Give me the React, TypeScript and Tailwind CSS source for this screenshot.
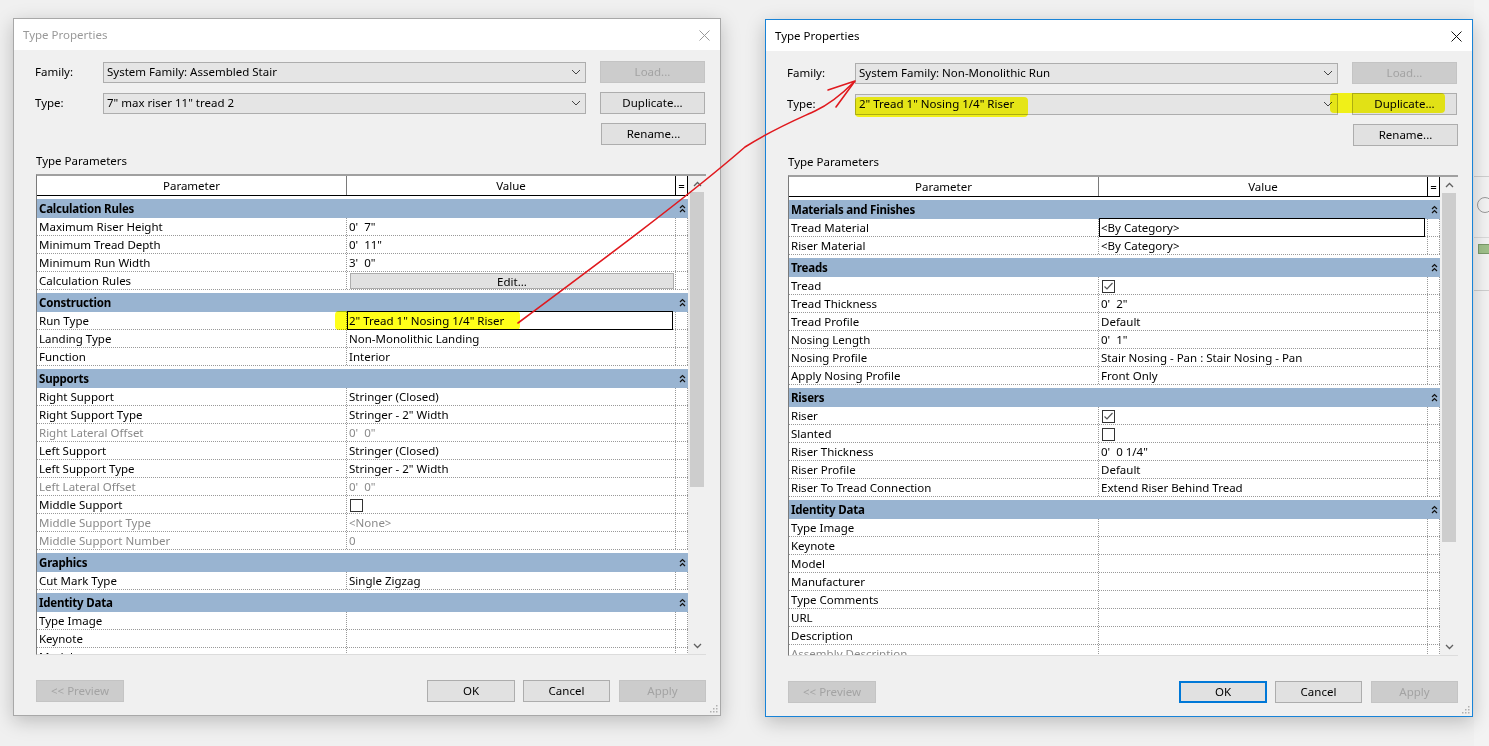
import React from "react"

type Row = {
  label: string
  group?: boolean
  value?: string
  grey?: boolean
  kind?: "edit" | "check" | "box" | "selected"
}

const leftRows: Row[] = [
  { label: "Calculation Rules", group: true },
  { label: "Maximum Riser Height", value: "0'  7\"" },
  { label: "Minimum Tread Depth", value: "0'  11\"" },
  { label: "Minimum Run Width", value: "3'  0\"" },
  { label: "Calculation Rules", kind: "edit" },
  { label: "Construction", group: true },
  { label: "Run Type", value: "2\" Tread 1\" Nosing 1/4\" Riser", kind: "selected" },
  { label: "Landing Type", value: "Non-Monolithic Landing" },
  { label: "Function", value: "Interior" },
  { label: "Supports", group: true },
  { label: "Right Support", value: "Stringer (Closed)" },
  { label: "Right Support Type", value: "Stringer - 2\" Width" },
  { label: "Right Lateral Offset", value: "0'  0\"", grey: true },
  { label: "Left Support", value: "Stringer (Closed)" },
  { label: "Left Support Type", value: "Stringer - 2\" Width" },
  { label: "Left Lateral Offset", value: "0'  0\"", grey: true },
  { label: "Middle Support", kind: "box" },
  { label: "Middle Support Type", value: "<None>", grey: true },
  { label: "Middle Support Number", value: "0", grey: true },
  { label: "Graphics", group: true },
  { label: "Cut Mark Type", value: "Single Zigzag" },
  { label: "Identity Data", group: true },
  { label: "Type Image" },
  { label: "Keynote" },
  { label: "Model" },
]

const rightRows: Row[] = [
  { label: "Materials and Finishes", group: true },
  { label: "Tread Material", value: "<By Category>", kind: "selected" },
  { label: "Riser Material", value: "<By Category>" },
  { label: "Treads", group: true },
  { label: "Tread", kind: "check" },
  { label: "Tread Thickness", value: "0'  2\"" },
  { label: "Tread Profile", value: "Default" },
  { label: "Nosing Length", value: "0'  1\"" },
  { label: "Nosing Profile", value: "Stair Nosing - Pan : Stair Nosing - Pan" },
  { label: "Apply Nosing Profile", value: "Front Only" },
  { label: "Risers", group: true },
  { label: "Riser", kind: "check" },
  { label: "Slanted", kind: "box" },
  { label: "Riser Thickness", value: "0'  0 1/4\"" },
  { label: "Riser Profile", value: "Default" },
  { label: "Riser To Tread Connection", value: "Extend Riser Behind Tread" },
  { label: "Identity Data", group: true },
  { label: "Type Image" },
  { label: "Keynote" },
  { label: "Model" },
  { label: "Manufacturer" },
  { label: "Type Comments" },
  { label: "URL" },
  { label: "Description" },
  { label: "Assembly Description", grey: true },
]

const Chevron = () => (
  <svg width="10" height="6" viewBox="0 0 10 6">
    <polyline points="1,1 5,5 9,1" fill="none" stroke="#444" strokeWidth="1" />
  </svg>
)

const Caret = ({ down }: { down?: boolean }) => (
  <svg width="9" height="6" viewBox="0 0 9 6">
    <polyline points={down ? "1,1 4.5,4.5 8,1" : "1,5 4.5,1.5 8,5"} fill="none" stroke="#606060" strokeWidth="1.3" />
  </svg>
)

const DoubleCaret = () => (
  <svg width="7" height="9" viewBox="0 0 7 9">
    <polyline points="1,4 3.5,1.5 6,4" fill="none" stroke="#111" strokeWidth="1.2" />
    <polyline points="1,8 3.5,5.5 6,8" fill="none" stroke="#111" strokeWidth="1.2" />
  </svg>
)

const CloseX = ({ active }: { active: boolean }) => (
  <svg width="11" height="11" viewBox="0 0 11 11">
    <path d="M0.5,0.5 L10.5,10.5 M10.5,0.5 L0.5,10.5" stroke={active ? "#111" : "#999"} strokeWidth="1" />
  </svg>
)

const Checkbox = ({ checked }: { checked?: boolean }) => (
  <div className="w-[13px] h-[13px] bg-white border border-[#333] flex items-center justify-center">
    {checked && (
      <svg width="11" height="11" viewBox="0 0 11 11">
        <polyline points="1.5,5.5 4,8 9.5,2" fill="none" stroke="#555" strokeWidth="1.2" />
      </svg>
    )}
  </div>
)

const Btn = ({ label, disabled, primary, className = "" }: { label: string; disabled?: boolean; primary?: boolean; className?: string }) => (
  <div
    className={`h-[22px] flex items-center justify-center ${className} ${
      disabled
        ? "bg-[#cccccc] border border-[#c4c4c4] text-[#a3a3a3]"
        : primary
        ? "bg-[#e1e1e1] border-2 border-[#0078d7] text-black"
        : "bg-[#e1e1e1] border border-[#adadad] text-black"
    }`}
  >
    {label}
  </div>
)

const Combo = ({ text }: { text: string }) => (
  <div className="w-[483px] h-[21px] bg-[#e5e5e5] border border-[#adadad] flex items-center justify-between pl-[3px] pr-[4px]">
    <span>{text}</span>
    <Chevron />
  </div>
)

const dot = "border-dotted border-[#999]"

function TableRow({ row }: { row: Row }) {
  if (row.group) {
    return (
      <div className="mt-[3px] h-[19px] shrink-0 bg-[#99b4d1] flex items-center justify-between pl-[2px] font-bold tracking-[-0.2px]">
        <span>{row.label}</span>
        <span className="w-[12px] flex justify-center">
          <DoubleCaret />
        </span>
      </div>
    )
  }
  const tone = row.grey ? "text-[#8a8a8a]" : "text-black"
  return (
    <div className={`grid grid-cols-[310px_329px_12px] h-[18px] shrink-0 bg-white border-b ${dot}`}>
      <div className={`pl-[2px] leading-[17px] whitespace-nowrap overflow-hidden border-r ${dot} ${tone}`}>{row.label}</div>
      <div className={`relative pl-[2px] leading-[17px] whitespace-pre border-r ${dot} ${tone}`}>
        {row.kind === "edit" && (
          <div className="mx-[1px] mt-[1px] h-[16px] bg-[#e1e1e1] border border-[#adadad] flex items-center justify-center text-black">
            Edit...
          </div>
        )}
        {(row.kind === "check" || row.kind === "box") && (
          <div className="pt-[3px] pl-[1px]">
            <Checkbox checked={row.kind === "check"} />
          </div>
        )}
        {row.value}
        {row.kind === "selected" && <div className="absolute -top-px left-0 right-[2px] -bottom-px border border-black" />}
      </div>
      <div className={`border-r ${dot}`} />
    </div>
  )
}

function Dialog({
  pos,
  active,
  family,
  type,
  rows,
  thumb,
}: {
  pos: string
  active: boolean
  family: string
  type: string
  rows: Row[]
  thumb: string
}) {
  return (
    <div
      className={`absolute ${pos} w-[708px] h-[698px] flex flex-col bg-[#f0f0f0] border ${
        active ? "border-[#1883d7]" : "border-[#a8a8a8]"
      } shadow-[0_5px_18px_rgba(0,0,0,0.22)]`}
    >
      <div className="h-[31px] shrink-0 bg-white flex items-center justify-between pl-[9px] pr-[10px] pt-[1px]">
        <span className={active ? "text-black" : "text-[#999]"}>Type Properties</span>
        <CloseX active={active} />
      </div>

      <div className="flex flex-col pl-[22px] pr-[14px] pt-[11px]">
        <div className="flex items-center h-[22px]">
          <span className="w-[68px] -ml-[1px]">Family:</span>
          <Combo text={family} />
          <Btn label="Load..." disabled className="ml-[14px] w-[105px]" />
        </div>
        <div className="flex items-center h-[22px] mt-[9px]">
          <span className="w-[68px] -ml-[1px]">Type:</span>
          <Combo text={type} />
          <Btn label="Duplicate..." className="ml-[14px] w-[105px]" />
        </div>
        <div className="flex justify-end h-[22px] mt-[9px]">
          <Btn label="Rename..." className="w-[105px]" />
        </div>

        <div className="mt-[8px] leading-[16px]">Type Parameters</div>

        <div className="mt-[5px] h-[481px] flex border-t-2 border-l border-b border-t-[#a0a0a0] border-l-[#7a7a7a] border-b-[#dcdcdc] bg-white">
          <div className="w-[651px] flex flex-col overflow-hidden">
            <div className="grid grid-cols-[310px_329px_12px] h-[20px] shrink-0 bg-white border-b border-black">
              <div className="flex items-center justify-center border-r border-[#7a7a7a]">Parameter</div>
              <div className="flex items-center justify-center border-r border-black">Value</div>
              <div className="flex items-center justify-center border-r border-black leading-none">=</div>
            </div>
            {rows.map((r, i) => (
              <TableRow key={i} row={r} />
            ))}
          </div>
          <div className="w-[18px] flex flex-col bg-[#f0f0f0]">
            <div className="h-[16px] flex items-center justify-center">
              <Caret />
            </div>
            <div className={`mx-[2px] bg-[#cdcdcd] ${thumb}`} />
            <div className="mt-auto h-[16px] flex items-center justify-center">
              <Caret down />
            </div>
          </div>
        </div>

        <div className="mt-[25px] flex">
          <Btn label="<< Preview" disabled className="w-[88px]" />
          <Btn label="OK" primary={active} className="ml-auto w-[88px]" />
          <Btn label="Cancel" className="ml-[8px] w-[87px]" />
          <Btn label="Apply" disabled className="ml-[9px] w-[87px]" />
        </div>
      </div>

      <svg className="absolute right-[2px] bottom-[2px]" width="10" height="10" viewBox="0 0 10 10">
        {[
          [8, 2],
          [8, 5],
          [5, 5],
          [8, 8],
          [5, 8],
          [2, 8],
        ].map(([x, y], i) => (
          <rect key={i} x={x} y={y} width="1.5" height="1.5" fill="#b0b0b0" />
        ))}
      </svg>
    </div>
  )
}

export default function App() {
  return (
    <div className="relative w-[1489px] h-[746px] overflow-hidden bg-[#f0f0f0] text-[11.5px] text-black font-['Noto_Sans',sans-serif]">
      {/* app window peeking out at the right edge */}
      <div className="absolute left-[1474px] top-0 w-[15px] h-[746px] flex flex-col bg-[#f3f3f3]">
        <div className="mt-[176px] border-t border-[#cfcfcf]" />
        <div className="mt-[20px] ml-[3px] w-[16px] h-[16px] rounded-full border border-[#9a9a9a]" />
        <div className="mt-[24px] border-t border-[#dadada]" />
        <div className="mt-[6px] ml-[4px] w-[14px] h-[10px] bg-[#9fc08a] border border-[#7a9a6a]" />
        <div className="mt-[36px] border-t border-[#cfcfcf]" />
      </div>

      <Dialog
        pos="left-[13px] top-[18px]"
        active={false}
        family="System Family: Assembled Stair"
        type={'7" max riser 11" tread 2'}
        rows={leftRows}
        thumb="h-[295px]"
      />
      <Dialog
        pos="left-[765px] top-[19px]"
        active
        family="System Family: Non-Monolithic Run"
        type={'2" Tread 1" Nosing 1/4" Riser'}
        rows={rightRows}
        thumb="h-[349px]"
      />

      {/* highlighter marks and hand-drawn arrow */}
      <div className="absolute left-[335px] top-[311px] w-[185px] h-[19px] rounded-[4px] bg-[#ffff00] opacity-90 mix-blend-multiply pointer-events-none" />
      <div className="absolute left-[855px] top-[97px] w-[173px] h-[20px] rounded-[4px] bg-[#ffff00] opacity-90 mix-blend-multiply pointer-events-none" />
      <div className="absolute left-[1330px] top-[93px] w-[115px] h-[20px] rounded-[4px] bg-[#ffff00] opacity-90 mix-blend-multiply pointer-events-none" />

      <svg className="absolute left-0 top-0 pointer-events-none" width="1489" height="746" viewBox="0 0 1489 746">
        <path
          d="M518,323 C600,262 690,195 745,147 C775,128 800,118 815,111 C830,104 843,93 854,82"
          fill="none"
          stroke="#e0191e"
          strokeWidth="1.6"
          strokeLinecap="round"
        />
        <path d="M828,90 L855,81 M855,81 L836,107" fill="none" stroke="#e0191e" strokeWidth="1.6" strokeLinecap="round" />
      </svg>
    </div>
  )
}
